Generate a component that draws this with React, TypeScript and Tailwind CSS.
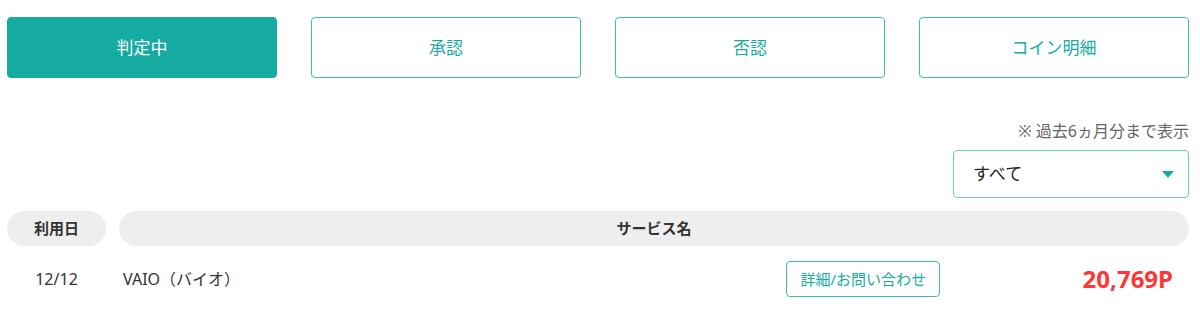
import React from 'react';

const tabs = ['判定中', '承認', '否認', 'コイン明細'];

const font = { fontFamily: '"Noto Sans", "Noto Sans CJK JP", sans-serif' };

export default function App() {
  return (
    <div className="w-[1200px] h-[324px] bg-white pl-[7px] pr-[11px] pt-[17px] text-[#333]" style={font}>
      {/* tabs */}
      <div className="flex gap-[34px]">
        {tabs.map((t, i) => (
          <button
            key={t}
            className={
              i === 0
                ? 'w-[270px] h-[61px] rounded-[4px] bg-[#16aba1] border border-[#16aba1] text-white text-[17px] flex items-center justify-center'
                : 'w-[270px] h-[61px] rounded-[4px] bg-white border border-[#3dbab2] text-[#17aba1] text-[17px] flex items-center justify-center'
            }
          >
            {t}
          </button>
        ))}
      </div>

      {/* note + filter */}
      <div className="flex flex-col items-end">
        <p className="mt-[43px] text-[16px] leading-[20px] text-[#666]">※ 過去6ヵ月分まで表示</p>
        <div className="mt-[9px] w-[236px] h-[48px] rounded-[4px] border border-[#6ccac3] flex items-center justify-between pl-[19px] pr-[14px]">
          <span className="text-[17px] text-[#222]">すべて</span>
          <svg width="12" height="7" viewBox="0 0 12 7">
            <path d="M0 0 H12 L6 7 Z" fill="#17aba1" />
          </svg>
        </div>
      </div>

      {/* table header */}
      <div className="mt-[13px] flex gap-[13px]">
        <div className="w-[99px] h-[35px] rounded-full bg-[#eeeeee] flex items-center justify-center text-[15px] font-bold">
          利用日
        </div>
        <div className="flex-1 h-[35px] rounded-full bg-[#eeeeee] flex items-center justify-center text-[15px] font-bold">
          サービス名
        </div>
      </div>

      {/* row */}
      <div className="mt-[15px] flex items-center h-[36px]">
        <div className="w-[99px] text-center text-[16px]">12/12</div>
        <div className="ml-[17px] flex-1 text-[16px]">VAIO（バイオ）</div>
        <button className="h-[36px] px-[13px] rounded-[4px] border border-[#3dbab2] text-[#17aba1] text-[15px] flex items-center">
          詳細/お問い合わせ
        </button>
        <div className="w-[249px] text-right pr-[16px] text-[24px] font-bold text-[#ff3636] leading-none">
          20,769P
        </div>
      </div>
    </div>
  );
}
